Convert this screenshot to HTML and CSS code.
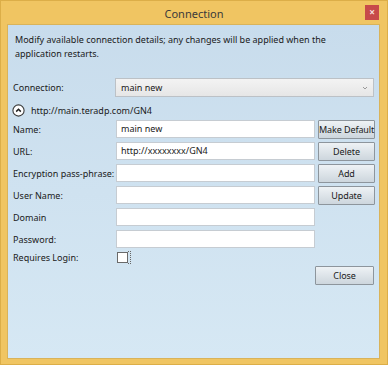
FILE: index.html
```html
<!DOCTYPE html>
<html lang="en">
<head>
    <meta charset="UTF-8">
    <title>Connection</title>
    <link rel="stylesheet" href="styles.css">
</head>
<body>
    <div class="window">
        <div class="titlebar">
            <span class="title">Connection</span>
            <span class="close-x">&#215;</span>
        </div>

        <div class="client">
            <p class="desc">Modify available connection details; any changes will be applied when the application restarts.</p>

            <div class="conn-row">
                <label>Connection:</label>
                <div class="combo">
                    <span>main new</span>
                    <svg width="6" height="4" viewBox="0 0 6 4"><path d="M1 1l2 2 2-2" fill="none" stroke="#999" stroke-width="1"/></svg>
                </div>
            </div>

            <div class="expander">
                <svg width="13" height="13" viewBox="0 0 13 13"><circle cx="6.5" cy="6.5" r="5.6" fill="#fff" stroke="#3c3c3c" stroke-width="1.1"/><path d="M4.2 7.6L6.5 5.3l2.3 2.3" fill="none" stroke="#1e1e1e" stroke-width="1.5"/></svg>
                <span>http://main.teradp.com/GN4</span>
            </div>

            <div class="form">
                <label>Name:</label>
                <div class="box">main new</div>
                <button>Make Default</button>

                <label>URL:</label>
                <div class="box">http://xxxxxxxx/GN4</div>
                <button>Delete</button>

                <label>Encryption pass-phrase:</label>
                <div class="box"></div>
                <button>Add</button>

                <label>User Name:</label>
                <div class="box"></div>
                <button>Update</button>

                <label>Domain</label>
                <div class="box"></div>
                <span></span>

                <label>Password:</label>
                <div class="box"></div>
                <span></span>

                <label>Requires Login:</label>
                <div class="check-wrap"><span class="check"></span><span class="focus"></span></div>
                <span></span>
            </div>

            <div class="footer">
                <button>Close</button>
            </div>
        </div>
    </div>
</body>
</html>
```

FILE: styles.css
```css
body {
    margin: 0;
    font-family: "Noto Sans", "Open Sans", sans-serif;
    font-size: 9px;
    color: #1a1a1a;
}
.window {
    width: 388px;
    height: 365px;
    box-sizing: border-box;
    background: #f0c562;
    border: 1px solid #dcae48;
    display: flex;
    flex-direction: column;
}
.titlebar {
    height: 23px;
    display: flex;
    align-items: center;
    justify-content: center;
    position: relative;
}
.title {
    font-size: 11px;
    color: #3a3a3a;
    margin-top: 1px;
}
.close-x {
    position: absolute;
    right: 8px;
    top: 4px;
    width: 14px;
    height: 15px;
    background: #c74a4a;
    color: #f4dede;
    font-size: 10px;
    line-height: 15px;
    text-align: center;
    font-weight: bold;
}
.client {
    flex: 1;
    margin: 0 7px 5px 6px;
    border: 1px solid #d9b35a;
    background: linear-gradient(#c8dcec, #d6e8f4);
    padding: 8px 5px 0 4px;
}
.desc {
    margin: 0 0 0 3px;
    line-height: 14px;
}
.conn-row {
    display: grid;
    grid-template-columns: 103px 1fr;
    align-items: center;
    margin-top: 17px;
}
label {
    padding-left: 1px;
    white-space: nowrap;
}
.combo {
    height: 17px;
    border: 1px solid #bcc1c6;
    background: linear-gradient(#f3f3f3, #e6e6e6);
    display: flex;
    align-items: center;
    justify-content: space-between;
    padding: 0 5px 0 5px;
}
.expander {
    display: flex;
    align-items: center;
    gap: 6px;
    height: 16px;
    margin-top: 5px;
}
.form {
    display: grid;
    grid-template-columns: 101px 199px 57px;
    grid-template-rows: repeat(6, 22px) 14px;
    column-gap: 3px;
    align-items: center;
}
.box {
    height: 16px;
    background: #fff;
    border: 1px solid #c6ccd2;
    line-height: 16px;
    padding-left: 4px;
}
button {
    font-family: inherit;
    font-size: 9px;
    letter-spacing: -0.1px;
    color: #1a1a1a;
    height: 19px;
    padding: 0;
    white-space: nowrap;
    border: 1px solid #8d959c;
    border-radius: 1px;
    background: linear-gradient(#eef2f5, #cdd6dd);
}
.check-wrap {
    display: flex;
    align-items: center;
}
.check {
    width: 9px;
    height: 9px;
    background: #fff;
    border: 1px solid #6a6a6a;
    margin-left: 1px;
}
.focus {
    width: 2px;
    height: 11px;
    border: 1px dotted #666;
    border-left: none;
}
.footer {
    display: flex;
    justify-content: flex-end;
    margin-top: 2px;
}
.footer button {
    width: 59px;
}
```
